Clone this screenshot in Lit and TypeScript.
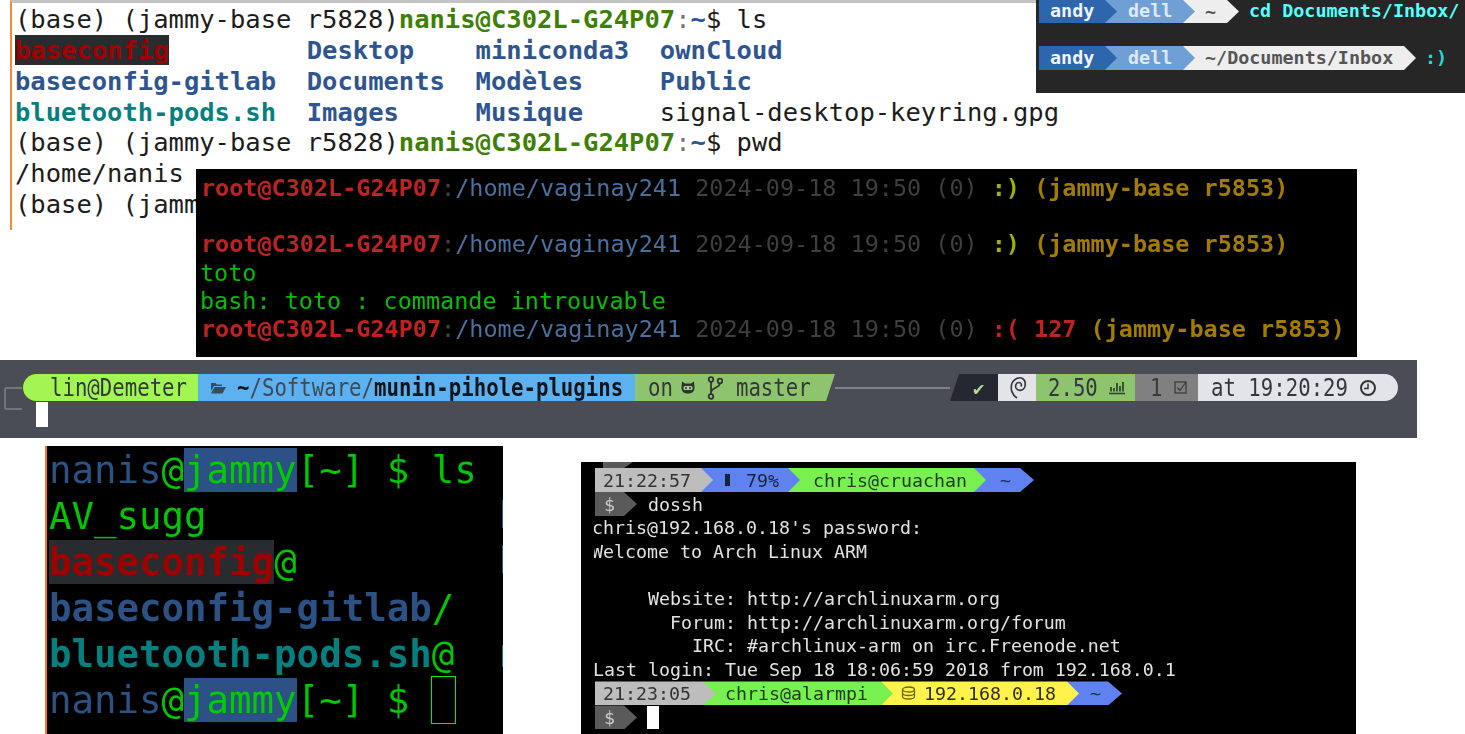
import { LitElement, html, css } from "lit";
import { customElement } from "lit/decorators.js";

const MONO = css`"DejaVu Sans Mono", "Liberation Mono", monospace`;

const folder = html`<svg class="ic" width="16" height="12" viewBox="0 0 16 12"><path d="M1 1h4.500l1.200 1.500H12V4H4L1 9z" fill="#3a4a5c"/><path d="M4.500 5H16l-3.500 6.500H1z" fill="#3a4a5c"/></svg>`;
const cat = html`<svg class="ic" width="14" height="13" viewBox="0 0 14 13"><path d="M1 0.500l3 2h6l3-2 .5 6.500C13.500 10.500 11 12.500 7 12.500S.5 10.500.5 7z" fill="#2d322c"/><rect x="2.500" y="5" width="9" height="4" rx="1.500" fill="#a9cf90"/><circle cx="5" cy="7" r="1" fill="#2d322c"/><circle cx="9" cy="7" r="1" fill="#2d322c"/></svg>`;
const branch = html`<svg class="ic" width="16" height="24" viewBox="0 0 16 24"><g fill="none" stroke="#333" stroke-width="1.800"><circle cx="4" cy="3.500" r="2.300"/><circle cx="4" cy="20.500" r="2.300"/><circle cx="13" cy="5" r="2.300"/><path d="M4 6v12M13 7.500C12.500 12 5 11.500 4 16"/></g></svg>`;
const swirl = html`<svg class="ic" width="18" height="23" viewBox="0 0 18 23"><path d="M8 22C3 19 1 13 3 7 5 3 10 .5 13.500 2.500c3.500 2 3.500 8 1 10.500-2 2-6 2-7.500-1-1-2.500 0-5.500 3-5.500 2 0 3 2 2 4" fill="none" stroke="#33353b" stroke-width="1.600"/></svg>`;
const chart = html`<svg class="ic" width="18" height="15" viewBox="0 0 18 15"><path d="M1 13.500h16" stroke="#2f4a2a" stroke-width="1.600"/><path d="M3 11.500V7M6 11.500V8M9 11.500V3M12 11.500V6M15 11.500V2" stroke="#2f4a2a" stroke-width="1.800"/></svg>`;
const box = html`<svg class="ic" width="15" height="15" viewBox="0 0 15 15"><rect x="1" y="2" width="11" height="11" fill="none" stroke="#3c3c3c" stroke-width="1.300"/><path d="M3.500 7.500l2.500 3L12 2" fill="none" stroke="#3c3c3c" stroke-width="1.300"/></svg>`;
const clock = html`<svg class="ic" width="18" height="18" viewBox="0 0 18 18"><circle cx="9" cy="9" r="7" fill="none" stroke="#333" stroke-width="2"/><path d="M9 4.500V9.500H5" fill="none" stroke="#333" stroke-width="1.500"/></svg>`;
const db = html`<svg class="ic" width="15" height="14" viewBox="0 0 15 14"><g fill="none" stroke="#6a6a10" stroke-width="1.300"><ellipse cx="7.500" cy="3.500" rx="6" ry="2.500"/><path d="M1.500 3.500v7c0 1.400 2.700 2.500 6 2.500s6-1.100 6-2.500v-7M1.500 7c0 1.400 2.700 2.500 6 2.500s6-1.100 6-2.500"/></g></svg>`;

@customElement("app-root")
export class AppRoot extends LitElement {
  static styles = css`
    :host { display: block; width: 1465px; height: 734px; position: relative; overflow: hidden; background: #fff; font-family: ${MONO}; }
    .win { position: absolute; box-sizing: border-box; overflow: hidden; }
    .l { white-space: pre; }
    b { font-weight: 700; }

    /* light terminal */
    .p1 { left: 10px; top: 0; width: 1060px; height: 230px; border-left: 2px solid #f08a3c; border-top: 3px solid #c4c4c4; padding: 1px 0 0 3px; font-size: 25.5px; line-height: 30.85px; color: #1c1c1c; }
    .g1 { color: #3f7f06; font-weight: 700; }
    .c1 { color: #777; }
    .bl1 { color: #2f5590; font-weight: 700; }
    .te1 { color: #067f7f; font-weight: 700; }
    .rd1 { color: #a00000; background: #282c2e; font-weight: 700; }

    /* powerline top right */
    .p2 { left: 1036px; top: 0; width: 429px; height: 93px; background: #262626; font-size: 18.4px; display: flex; flex-direction: column; gap: 23px; padding-left: 3px; font-weight: 700; }
    .bar { display: flex; align-items: center; }
    .h23 { height: 23px; }
    .h24 { height: 24px; }
    .up { padding-bottom: 2px; }
    .seg { box-sizing: border-box; height: 100%; display: flex; align-items: center; position: relative; flex: none; clip-path: polygon(0 0, calc(100% - var(--t)) 0, 100% 50%, calc(100% - var(--t)) 100%, 0 100%); margin-right: calc(var(--t) * -1); --t: 12px; }
    .seg:nth-child(1) { z-index: 6; }
    .seg:nth-child(2) { z-index: 5; }
    .seg:nth-child(3) { z-index: 4; }
    .seg:nth-child(4) { z-index: 3; }
    .andy { width: 78px; padding-left: 11px; background: #2e66ad; color: #f0f4fa; }
    .dell { width: 90px; padding-left: 23px; background: #6f9fd4; color: #dfe9f5; }
    .tilde { width: 56px; padding-left: 22px; background: #eeeeee; color: #555; }
    .tilde2 { width: 233px; padding-left: 22px; background: #eeeeee; color: #555; }
    .cmd { color: #55ffff; margin-left: 22px; white-space: pre; padding-bottom: 2px; }
    .smile { color: #2ad6d6; margin-left: 21px; white-space: pre; padding-bottom: 2px; }

    /* black root prompt */
    .p3 { left: 196px; top: 169px; width: 1161px; height: 188px; background: #000; font-size: 23.46px; line-height: 28.2px; padding: 5px 0 0 5px; filter: blur(0.3px); }
    .rd3 { color: #bf2222; font-weight: 700; }
    .c3 { color: #444; }
    .bl3 { color: #4a709e; }
    .dt3 { color: #3f3f3f; }
    .ok3 { color: #a2b000; font-weight: 700; }
    .am3 { color: #a17c00; font-weight: 700; }
    .gr3 { color: #00c000; margin-left: -1px; }

    /* grey powerlevel bar */
    .p4 { left: 0; top: 360px; width: 1417px; height: 78px; background: #4a4d55; font-size: 20.7px; filter: blur(0.45px); padding: 14px 0 0 23px; color: #33383a; }
    .p4 .bar { height: 27px; width: 1375px; }
    .tall { display: inline-block; transform: scaleY(1.2); white-space: pre; }
    .cell { box-sizing: border-box; height: 100%; display: flex; align-items: center; flex: none; white-space: pre; }
    .host { width: 175px; padding-left: 27px; background: #a2f552; border-radius: 14px 0 0 14px; }
    .path { width: 437px; padding-left: 12px; gap: 11px; background: #5eb1ef; color: #3c4a5a; }
    .path b { color: #10151c; }
    .git { width: 200px; padding-left: 13px; background: #8fc46e; clip-path: polygon(0 0, 100% 0, calc(100% - 9px) 100%, 0 100%); }
    .git .m1 { margin-left: 8px; }
    .git .m2 { margin-left: 12px; }
    .git .m3 { margin-left: 13px; }
    .rule { flex: 1; height: 2px; background: #7d8084; }
    .stat { width: 48px; padding-left: 23px; background: #232831; color: #b4dc8e; clip-path: polygon(9px 0, 100% 0, 100% 100%, 0 100%); font-size: 19px; font-weight: 700; }
    .deb { width: 38px; padding-left: 11px; background: #e3e4e8; }
    .load { width: 99px; padding-left: 12px; gap: 10px; background: #8fc46e; }
    .jobs { width: 63px; padding-left: 15px; gap: 12px; background: #808080; color: #3a3a3a; }
    .time { width: 200px; padding-left: 13px; gap: 11px; background: #e3e4e8; border-radius: 0 14px 14px 0; }
    .frame { position: absolute; left: 4px; top: 27px; width: 18px; height: 23px; box-sizing: border-box; border: 2px solid #72757b; border-right: 0; border-radius: 3px 0 0 3px; }
    .cur4 { position: absolute; left: 36px; top: 42px; width: 12px; height: 25px; background: #fff; }

    /* big zoomed terminal */
    .p5 { left: 45px; top: 446px; width: 458px; height: 288px; background: #000; border-left: 2px solid #f07a22; font-size: 37.4px; line-height: 46px; padding: 1px 0 0 2px; color: #00c800; filter: blur(0.25px); }
    .bl5 { color: #2c5285; }
    .j5 { background: #2c5285; color: #00cc00; }
    .rd5 { color: #a00000; background: #282c2e; font-weight: 700; }
    .bb5 { color: #2c5285; font-weight: 700; }
    .te5 { color: #067f7f; font-weight: 700; }
    .cur5 { position: absolute; left: 384px; top: 230px; width: 25px; height: 48px; box-sizing: border-box; border: 1px solid #00f000; }
    .stub { position: absolute; right: 0; width: 1.500px; background: #2c5285; }
    .s1 { top: 54px; height: 28px; }
    .s2 { top: 99px; height: 28px; }
    .s3 { top: 199px; height: 22px; background: #067f7f; }

    /* chris terminal */
    .p6 { left: 581px; top: 462px; width: 775px; height: 272px; background: #000; font-size: 18.27px; filter: blur(0.5px); color: #e2e2e2; padding-top: 6px; }
    .p6 .bar { height: 24px; padding-left: 14px; }
    .stubtop { position: absolute; left: 22px; top: 0; width: 30px; height: 6px; background: #5a5a5a; clip-path: polygon(0 0, 100% 0, 70% 100%, 0 100%); }
    .t1 { width: 118px; padding-left: 8px; background: #bdbdbd; color: #333; }
    .t2 { width: 99px; padding-left: 24px; gap: 16px; background: #5f82f0; color: #16243c; }
    .batt { width: 5px; height: 12px; background: #16243c; flex: none; }
    .t3 { width: 198px; padding-left: 25px; background: #78f050; color: #1f3a1f; }
    .t4 { width: 60px; padding-left: 26px; background: #5f82f0; color: #1e2f5c; --t: 14px; }
    .u1 { width: 121px; padding-left: 8px; background: #bdbdbd; color: #333; --t: 13px; }
    .u2 { width: 190px; padding-left: 22px; background: #78f050; color: #1f3a1f; }
    .u3 { width: 198px; padding-left: 20px; gap: 8px; background: #fff24a; color: #2e2e14; }
    .u4 { width: 55px; padding-left: 23px; background: #5f82f0; color: #1e2f5c; --t: 14px; }
    .dollar { width: 42px; padding-left: 9px; background: #5a5a5a; color: #c9c9c9; --t: 13px; }
    .out { margin-left: 24px; white-space: pre; }
    .body6 { margin-left: 13px; line-height: 23.65px; overflow: hidden; }
    .body6 .l { height: 23.65px; }
    .body6 .pl { margin-left: -1px; }
    .body6 .cl { margin-left: -2px; }
    .cur6 { width: 12px; height: 23px; background: #fff; margin-left: 23px; }
    .ic { flex: none; display: block; }
  `;

  render() {
    const p1prompt = html`<span class="g1">nanis@C302L-G24P07</span><span class="c1">:</span><span class="bl1">~</span>`;
    const p3 = (tail: unknown) => html`<div class="l"><span class="rd3">root@C302L-G24P07</span><span class="c3">:</span><span class="bl3">/home/vaginay241</span> <span class="dt3">2024-09-18 19:50 (0)</span> ${tail} <span class="am3">(jammy-base r5853)</span></div>`;
    const p5 = (tail: string) => html`<div class="l"><span class="bl5">nanis</span>@<span class="j5">jammy</span>[~] $ ${tail}</div>`;
    return html`
      <section class="win p1">
        <div class="l">(base) (jammy-base r5828)${p1prompt}$ ls</div>
        <div class="l"><span class="rd1">baseconfig</span>         <span class="bl1">Desktop</span>    <span class="bl1">miniconda3</span>  <span class="bl1">ownCloud</span></div>
        <div class="l"><span class="bl1">baseconfig-gitlab</span>  <span class="bl1">Documents</span>  <span class="bl1">Modèles</span>     <span class="bl1">Public</span></div>
        <div class="l"><span class="te1">bluetooth-pods.sh</span>  <span class="bl1">Images</span>     <span class="bl1">Musique</span>     signal-desktop-keyring.gpg</div>
        <div class="l">(base) (jammy-base r5828)${p1prompt}$ pwd</div>
        <div class="l">/home/nanis</div>
        <div class="l">(base) (jamm</div>
      </section>

      <section class="win p2">
        <div class="bar h23"><div class="seg up andy">andy</div><div class="seg up dell">dell</div><div class="seg tilde">~</div><div class="cmd">cd Documents/Inbox/</div></div>
        <div class="bar h24"><div class="seg up andy">andy</div><div class="seg up dell">dell</div><div class="seg up tilde2">~/Documents/Inbox</div><div class="smile">:)</div></div>
      </section>

      <section class="win p3">
        ${p3(html`<span class="ok3">:)</span>`)}
        <div class="l">&nbsp;</div>
        ${p3(html`<span class="ok3">:)</span>`)}
        <div class="l gr3">toto</div>
        <div class="l gr3">bash: toto : commande introuvable</div>
        ${p3(html`<span class="rd3">:( 127</span>`)}
      </section>

      <section class="win p4">
        <div class="frame"></div>
        <div class="bar">
          <div class="cell host"><span class="tall">lin@Demeter</span></div>
          <div class="cell path">${folder}<span class="tall"><b>~</b>/Software/<b>munin-pihole-plugins</b></span></div>
          <div class="cell git"><span class="tall">on</span><span class="m1">${cat}</span><span class="m2">${branch}</span><span class="tall m3">master</span></div>
          <div class="rule"></div>
          <div class="cell stat">✔</div>
          <div class="cell deb">${swirl}</div>
          <div class="cell load"><span class="tall">2.50</span>${chart}</div>
          <div class="cell jobs"><span class="tall">1</span>${box}</div>
          <div class="cell time"><span class="tall">at 19:20:29</span>${clock}</div>
        </div>
        <div class="cur4"></div>
      </section>

      <section class="win p5">
        ${p5("ls")}
        <div class="l">AV_sugg</div>
        <div class="l"><span class="rd5">baseconfig</span>@</div>
        <div class="l"><span class="bb5">baseconfig-gitlab</span>/</div>
        <div class="l"><span class="te5">bluetooth-pods.sh</span>@</div>
        ${p5("")}
        <div class="cur5"></div>
        <div class="stub s1"></div><div class="stub s2"></div><div class="stub s3"></div>
      </section>

      <section class="win p6">
        <div class="stubtop"></div>
        <div class="bar"><div class="seg t1">21:22:57</div><div class="seg t2"><span class="batt"></span>79%</div><div class="seg t3">chris@cruachan</div><div class="seg t4">~</div></div>
        <div class="bar"><div class="seg dollar">$</div><div class="out">dossh</div></div>
        <div class="body6">
          <div class="l cl">chris@192.168.0.18's password:</div>
          <div class="l cl">Welcome to Arch Linux ARM</div>
          <div class="l"> </div>
          <div class="l pl">     Website: http://archlinuxarm.org</div>
          <div class="l pl">       Forum: http://archlinuxarm.org/forum</div>
          <div class="l pl">         IRC: #archlinux-arm on irc.Freenode.net</div>
          <div class="l pl">Last login: Tue Sep 18 18:06:59 2018 from 192.168.0.1</div>
        </div>
        <div class="bar"><div class="seg u1">21:23:05</div><div class="seg u2">chris@alarmpi</div><div class="seg u3">${db}<span>192.168.0.18</span></div><div class="seg u4">~</div></div>
        <div class="bar"><div class="seg dollar">$</div><div class="cur6"></div></div>
      </section>
    `;
  }
}
